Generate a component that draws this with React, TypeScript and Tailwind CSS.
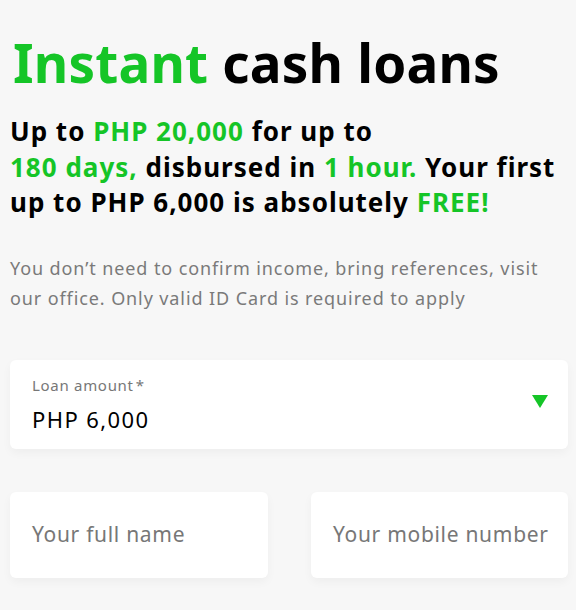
export default function App() {
  return (
    <div className="min-h-[610px] bg-[#f7f7f7] pl-[10px] pr-[8px] pt-[27px] pb-8 font-['Noto_Sans',sans-serif]">
      <h1 className="pl-[3px] text-[53px] font-bold leading-[72px] tracking-[0.2px] text-black">
        <span className="text-[#15c527]">Instant</span> cash loans
      </h1>
      <p className="mt-[15px] whitespace-nowrap text-[26px] font-bold leading-[35.5px] tracking-[1px] text-black">
        Up to <span className="text-[#15c527]">PHP 20,000</span> for up to
        <br />
        <span className="text-[#15c527]">180 days,</span> disbursed in{' '}
        <span className="text-[#15c527]">1 hour.</span> Your first
        <br />
        up to PHP 6,000 is absolutely <span className="text-[#15c527]">FREE!</span>
      </p>
      <p className="mt-[32px] whitespace-nowrap text-[18px] leading-[30px] tracking-[0.9px] text-[#7a7a7a]">
        You don’t need to confirm income, bring references, visit
        <br />
        our office. Only valid ID Card is required to apply
      </p>

      <div className="mt-[47px] flex h-[89px] items-center justify-between rounded-[6px] bg-white pl-[22px] pr-[20px] shadow-[0_4px_10px_rgba(0,0,0,0.04)]">
        <div className="flex flex-col">
          <span className="text-[15px] leading-[20px] tracking-[0.7px] text-[#777]">
            Loan amount<span className="ml-[2px]">*</span>
          </span>
          <span className="mt-[10px] text-[22px] leading-[28px] tracking-[1.4px] text-black">PHP 6,000</span>
        </div>
        <svg width="16" height="13" viewBox="0 0 16 13" className="mb-[6px]">
          <path d="M0 0h16L8 13z" fill="#15c527" />
        </svg>
      </div>

      <div className="mt-[43px] grid grid-cols-[258px_1fr] gap-[43px]">
        <div className="flex h-[86px] items-center rounded-[6px] bg-white pl-[22px] text-[21px] tracking-[0.7px] text-[#777] shadow-[0_4px_10px_rgba(0,0,0,0.04)]">
          Your full name
        </div>
        <div className="flex h-[86px] items-center rounded-[6px] bg-white pl-[22px] text-[21px] tracking-[0.7px] text-[#777] shadow-[0_4px_10px_rgba(0,0,0,0.04)]">
          Your mobile number
        </div>
      </div>
    </div>
  );
}
